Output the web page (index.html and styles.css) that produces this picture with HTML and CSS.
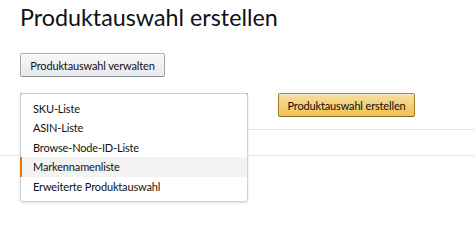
FILE: index.html
```html
<!DOCTYPE html>
<html lang="de">
<head>
<meta charset="utf-8">
<title>Produktauswahl erstellen</title>
<link rel="stylesheet" href="styles.css">
</head>
<body>
<div class="page">
  <h1 class="title">Produktauswahl erstellen</h1>
  <div class="toolbar">
    <button class="btn btn-secondary">Produktauswahl verwalten</button>
  </div>
  <div class="controls">
    <div class="select-wrap">
      <button class="select-trigger">Markennamenliste</button>
      <ul class="menu">
        <li class="menu-item">SKU-Liste</li>
        <li class="menu-item">ASIN-Liste</li>
        <li class="menu-item">Browse-Node-ID-Liste</li>
        <li class="menu-item is-active">Markennamenliste</li>
        <li class="menu-item">Erweiterte Produktauswahl</li>
      </ul>
    </div>
    <button class="btn btn-primary">Produktauswahl erstellen</button>
  </div>
  <div class="rule rule-inner"></div>
</div>
<div class="rule rule-full"></div>
</body>
</html>
```

FILE: styles.css
```css
html, body {
  margin: 0;
  padding: 0;
  background: #fff;
}

body {
  min-height: 214px;
  font-family: Lato, "Liberation Sans", sans-serif;
  color: #111;
}

.page {
  padding-left: 20px;
}

.title {
  margin: 0;
  padding-top: 3px;
  font-size: 23.3px;
  line-height: 28px;
  font-weight: 400;
  color: #111;
}

.toolbar {
  margin-top: 22px;
  display: flex;
}

.btn {
  font-family: inherit;
  font-size: 11px;
  letter-spacing: -0.15px;
  color: #111;
  height: 24px;
  padding: 0;
  border-radius: 2px;
  border: 1px solid;
  cursor: pointer;
  box-sizing: border-box;
  white-space: nowrap;
}

.btn-secondary {
  width: 145px;
  background: linear-gradient(to bottom, #f7f8fa, #e7e9ec);
  border-color: #adb1b8 #a2a6ac #8d9096;
  box-shadow: 0 1px 0 rgba(255,255,255,.6) inset;
}

.btn-primary {
  width: 137px;
  background: linear-gradient(to bottom, #f7dfa5, #f0c14b);
  border-color: #a88734 #9c7e31 #846a29;
  box-shadow: 0 1px 0 rgba(255,255,255,.4) inset;
}

.controls {
  margin-top: 16px;
  display: flex;
  align-items: flex-start;
  gap: 30px;
}

.select-wrap {
  position: relative;
  width: 228px;
  height: 24px;
}

.select-trigger {
  width: 100%;
  height: 24px;
  border: 1px solid #adb1b8;
  background: #f3f4f6;
}

.menu {
  position: absolute;
  top: 0;
  left: 0;
  width: 228px;
  height: 109px;
  box-sizing: border-box;
  margin: 0;
  padding: 5px 0 6px;
  list-style: none;
  background: #fff;
  border: 1px solid #cfd1d3;
  border-radius: 3px;
  box-shadow: 0 1px 3px rgba(0,0,0,.13);
  z-index: 2;
}

.menu-item {
  height: 19.4px;
  line-height: 19.4px;
  padding-left: 11px;
  font-size: 11px;
  letter-spacing: -0.15px;
  color: #111;
  border-left: 2px solid transparent;
  margin-left: -1px;
  white-space: nowrap;
}

.menu-item.is-active {
  background: #f3f3f3;
  border-left-color: #e77600;
}

.rule {
  height: 1px;
  background: #e7e7e7;
}

.rule-inner {
  margin-top: 12px;
}

.rule-full {
  margin-top: 25px;
}
```
